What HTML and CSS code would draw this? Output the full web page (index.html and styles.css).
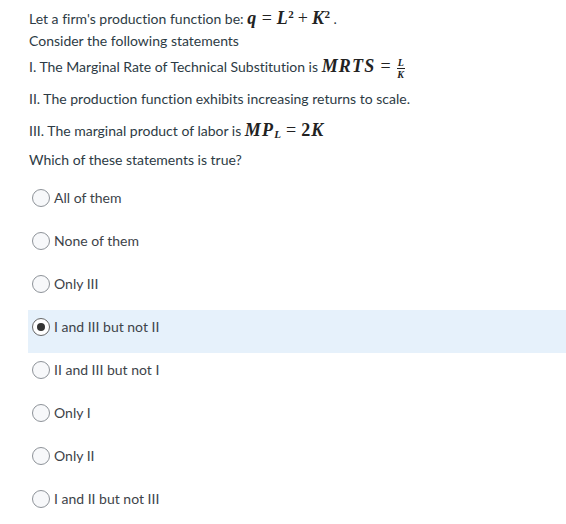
FILE: index.html
```html
<!DOCTYPE html>
<html>
<head>
<meta charset="utf-8">
<link rel="stylesheet" href="styles.css">
</head>
<body>
<div class="question">
  <p class="line l1">Let a firm's production function be: <span class="m">q</span><span class="op">=</span><span class="m">L</span><sup>2</sup><span class="op sm">+</span><span class="m">K</span><sup>2</sup> .</p>
  <p class="line l2">Consider the following statements</p>
  <p class="line l3">I. The Marginal Rate of Technical Substitution is <span class="m">MRTS</span><span class="op">=</span><span class="frac"><span class="num">L</span><span class="den">K</span></span></p>
  <p class="line l4">II. The production function exhibits increasing returns to scale.</p>
  <p class="line l5">III. The marginal product of labor is <span class="m">MP<sub>L</sub></span><span class="op">=</span><span class="n">2</span><span class="m">K</span></p>
  <p class="line l6">Which of these statements is true?</p>
</div>
<div class="options">
  <div class="opt"><span class="radio"></span><span class="label">All of them</span></div>
  <div class="opt"><span class="radio"></span><span class="label">None of them</span></div>
  <div class="opt"><span class="radio"></span><span class="label">Only III</span></div>
  <div class="opt selected"><span class="radio on"></span><span class="label">I and III but not II</span></div>
  <div class="opt"><span class="radio"></span><span class="label">II and III but not I</span></div>
  <div class="opt"><span class="radio"></span><span class="label">Only I</span></div>
  <div class="opt"><span class="radio"></span><span class="label">Only II</span></div>
  <div class="opt"><span class="radio"></span><span class="label">I and II but not III</span></div>
</div>
</body>
</html>
```
FILE: styles.css
```css
html, body { margin: 0; padding: 0; background: #fff; }
body {
  font-family: Lato, "Noto Sans", sans-serif;
  font-size: 14px;
  color: #2d3b45;
  padding-left: 29px;
  width: 537px;
  font-variant-ligatures: none;
}
.question { padding-top: 9px; }
.line { margin: 0; line-height: 18px; white-space: nowrap; }
.l2 { margin-top: 4px; }
.l3 { margin-top: 7px; }
.l4 { margin-top: 11px; }
.l5 { margin-top: 13px; }
.l6 { margin-top: 11px; }
.m {
  font-family: "Liberation Serif", "Times New Roman", serif;
  font-style: italic;
  font-weight: bold;
  font-size: 18px;
  letter-spacing: 1.2px;
  line-height: 18px;
  color: #222;
}
.l1 .m { letter-spacing: 0.5px; }
.op, .n {
  font-family: "Liberation Serif", serif;
  font-size: 18px;
  line-height: 18px;
  color: #222;
  margin: 0 5px;
}
.op.sm { margin: 0 4px; }
.n { font-weight: bold; margin: 0 1px 0 0; }
sup, sub {
  font-family: "Liberation Serif", serif;
  font-size: 11px;
  font-weight: bold;
  line-height: 0;
  color: #222;
  letter-spacing: 0;
}
sub { font-style: italic; vertical-align: -2px; }
.frac {
  display: inline-block;
  vertical-align: middle;
  text-align: center;
  font-family: "Liberation Serif", serif;
  font-style: italic;
  font-weight: bold;
  font-size: 10px;
  color: #222;
  margin-left: 1px;
}
.num, .den { display: block; line-height: 9px; }
.num { border-bottom: 1px solid #222; padding: 0 1px 1px; }
.den { padding-top: 1px; }
.options { margin-top: 12px; display: flex; flex-direction: column; }
.opt {
  height: 43px;
  box-sizing: border-box;
  display: flex;
  align-items: center;
  margin-left: -1px;
  padding: 0 0 9px 4px;
}
.opt .radio {
  width: 16px;
  height: 16px;
  border: 1px solid #8e9399;
  border-radius: 50%;
  background: #f7f8fa;
  flex: none;
  display: flex;
  align-items: center;
  justify-content: center;
}
.opt .label { margin-left: 4px; color: #3d4349; }
.opt.selected { background: #e6f1fb; }
.opt.selected .label { margin-left: 4px; }
.radio.on { background: #fff; border-color: #666; }
.radio.on::after {
  content: "";
  width: 8px;
  height: 8px;
  border-radius: 50%;
  background: #333;
}
```
